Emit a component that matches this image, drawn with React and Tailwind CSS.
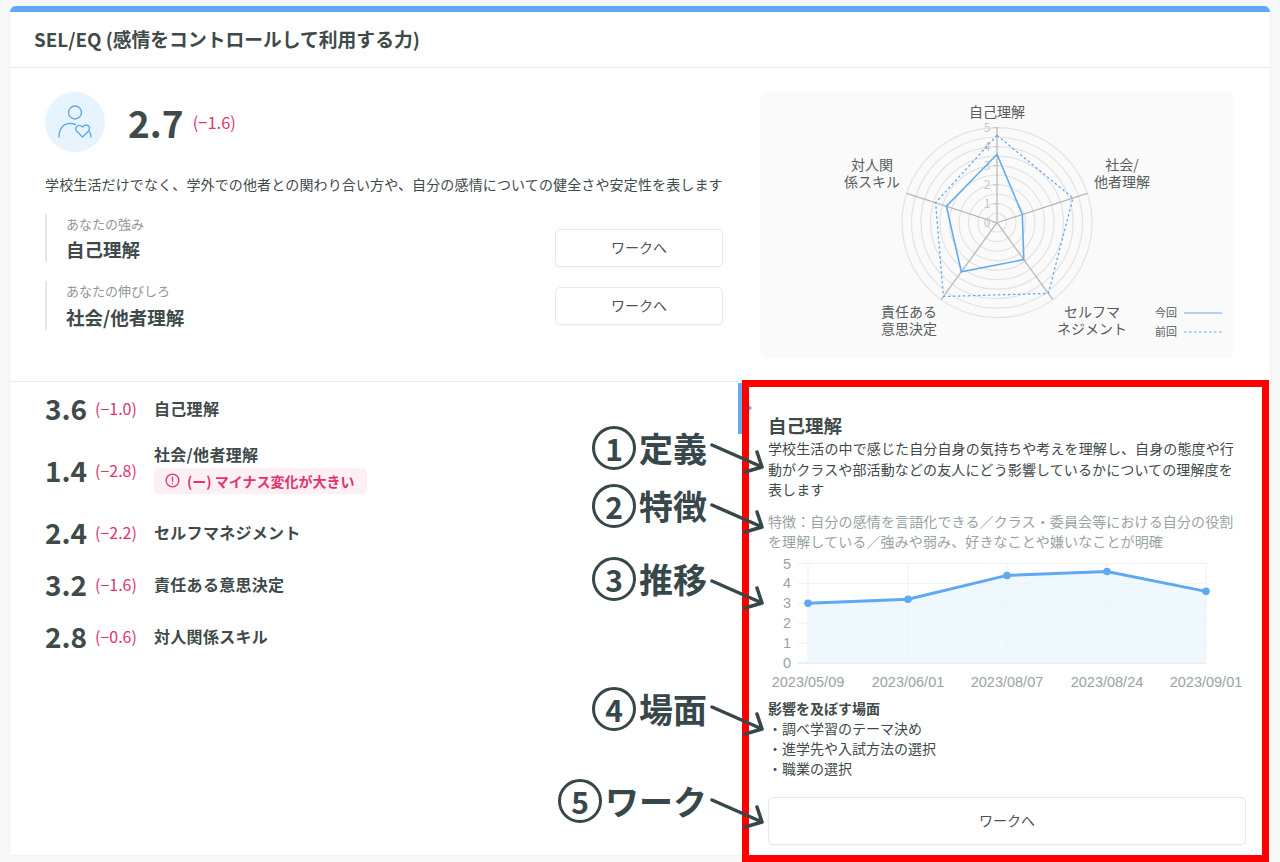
const scores = [
  { value: '3.6', diff: '(−1.0)', label: '自己理解', height: 'h-[52px]' },
  { value: '1.4', diff: '(−2.8)', label: '社会/他者理解', warn: true, height: 'h-[72px]' },
  { value: '2.4', diff: '(−2.2)', label: 'セルフマネジメント', height: 'h-[52px]' },
  { value: '3.2', diff: '(−1.6)', label: '責任ある意思決定', height: 'h-[52px]' },
  { value: '2.8', diff: '(−0.6)', label: '対人関係スキル', height: 'h-[52px]' },
];

const notes = [
  { mark: '①', text: '定義', pos: 'left-[592px] top-[425px]' },
  { mark: '②', text: '特徴', pos: 'left-[592px] top-[483px]' },
  { mark: '③', text: '推移', pos: 'left-[592px] top-[556px]' },
  { mark: '④', text: '場面', pos: 'left-[592px] top-[686px]' },
  { mark: '⑤', text: 'ワーク', pos: 'left-[558px] top-[778px]' },
];

// tip of each arrow, in page coordinates
const arrows = [
  [762, 467],
  [762, 527],
  [762, 603],
  [762, 729],
  [762, 822],
];

const CX = 997;
const CY = 222.7;
const UNIT = 19;
const current = [3.6, 1.4, 2.4, 3.2, 2.8];
const previous = [4.6, 4.2, 4.6, 4.8, 3.4];

const radarPoint = (i, v) => {
  const a = (Math.PI * 2 * i) / 5 - Math.PI / 2;
  return [CX + Math.cos(a) * v * UNIT, CY + Math.sin(a) * v * UNIT];
};
const radarPath = (vals) => vals.map((v, i) => radarPoint(i, v).map((n) => n.toFixed(1)).join(',')).join(' ');

function Radar() {
  const labels = [
    { x: 997, ys: [117], lines: ['自己理解'] },
    { x: 1122, ys: [170, 187], lines: ['社会/', '他者理解'] },
    { x: 1092, ys: [317, 334], lines: ['セルフマ', 'ネジメント'] },
    { x: 909, ys: [317, 334], lines: ['責任ある', '意思決定'] },
    { x: 872, ys: [170, 187], lines: ['対人関', '係スキル'] },
  ];
  return (
    <svg viewBox="760 92 473 266" className="block h-[266px] w-[473px]">
      {[0.5, 1, 1.5, 2, 2.5, 3, 3.5, 4, 4.5, 5].map((r) => (
        <circle key={r} cx={CX} cy={CY} r={r * UNIT} fill="none" stroke="#e3e3e3" strokeWidth="1.2" />
      ))}
      {[0, 1, 2, 3, 4].map((i) => {
        const [x, y] = radarPoint(i, 5);
        return <line key={i} x1={CX} y1={CY} x2={x} y2={y} stroke="#b5b5b5" strokeWidth="1.2" />;
      })}
      {[0, 1, 2, 3, 4, 5].map((n) => (
        <g key={n}>
          <line x1={CX - 4} x2={CX + 2} y1={CY - n * UNIT} y2={CY - n * UNIT} stroke="#c4c4c4" />
          <text x={987} y={CY - n * UNIT + 4.5} textAnchor="middle" fontSize="12" fill="#c6c9c9" fontFamily="Noto Sans CJK JP, sans-serif">
            {n}
          </text>
        </g>
      ))}
      <polygon points={radarPath(previous)} fill="none" stroke="#62aaf0" strokeWidth="1.3" strokeDasharray="2.500 2.500" />
      <polygon points={radarPath(current)} fill="none" stroke="#62aaf0" strokeWidth="1.6" />
      {labels.map((l) =>
        l.lines.map((t, j) => (
          <text key={t} x={l.x} y={l.ys[j]} textAnchor="middle" fontSize="14" fill="#555d5d" fontFamily="Noto Sans CJK JP, sans-serif">
            {t}
          </text>
        )),
      )}
      <text x={1155} y={317} fontSize="11" fill="#555d5d" fontFamily="Noto Sans CJK JP, sans-serif">今回</text>
      <text x={1155} y={336} fontSize="11" fill="#555d5d" fontFamily="Noto Sans CJK JP, sans-serif">前回</text>
      <line x1={1184} x2={1222} y1={313} y2={313} stroke="#62aaf0" strokeWidth="1.2" />
      <line x1={1184} x2={1222} y1={332} y2={332} stroke="#62aaf0" strokeWidth="1.2" strokeDasharray="2.500 2.500" />
    </svg>
  );
}

function TrendChart() {
  const xs = [808, 908, 1007, 1107, 1206];
  const vals = [3, 3.2, 4.4, 4.6, 3.6];
  const dates = ['2023/05/09', '2023/06/01', '2023/08/07', '2023/08/24', '2023/09/01'];
  const yOf = (v) => 663 - v * 19.9;
  const line = xs.map((x, i) => `${x},${yOf(vals[i]).toFixed(1)}`).join(' ');
  return (
    <svg viewBox="768 553 478 140" className="block h-[140px] w-[478px]">
      {[0, 1, 2, 3, 4, 5].map((n) => (
        <g key={n}>
          <line x1={798} x2={1206} y1={yOf(n)} y2={yOf(n)} stroke={n === 0 ? '#d8e0e4' : '#eff1f2'} />
          <text x={787} y={yOf(n) + 5} textAnchor="middle" fontSize="14.500" fill="#9aa3a3" fontFamily="Liberation Sans, sans-serif">
            {n}
          </text>
        </g>
      ))}
      {xs.map((x) => (
        <line key={x} x1={x} x2={x} y1={563} y2={663} stroke="#eff1f2" />
      ))}
      <polygon points={`808,663 ${line} 1206,663`} fill="#e9f5fc" fillOpacity="0.75" />
      <polyline points={line} fill="none" stroke="#5fa8f3" strokeWidth="3" />
      {xs.map((x, i) => (
        <circle key={x} cx={x} cy={yOf(vals[i])} r="3.8" fill="#5fa8f3" />
      ))}
      {xs.map((x, i) => (
        <text key={dates[i]} x={x} y={687} textAnchor="middle" fontSize="14.500" fill="#9aa3a3" fontFamily="Liberation Sans, sans-serif">
          {dates[i]}
        </text>
      ))}
    </svg>
  );
}

function WorkButton({ className }) {
  return (
    <button className={`rounded-[5px] border border-[#e7e9e9] bg-white text-[14px] text-[#4a5353] shadow-[0_1px_2px_rgba(0,0,0,0.04)] ${className}`}>
      ワークへ
    </button>
  );
}

function Arrow({ tip }) {
  const [x, y] = tip;
  return (
    <svg className="pointer-events-none absolute left-0 top-0 h-[862px] w-[1280px]" viewBox="0 0 1280 862">
      <path
        d={`M${x - 50} ${y - 22}L${x} ${y}M${x - 5} ${y - 15}L${x} ${y}L${x - 17} ${y + 5}`}
        fill="none"
        stroke="#37474a"
        strokeWidth="3.500"
        strokeLinecap="round"
        strokeLinejoin="round"
      />
    </svg>
  );
}

export default function App() {
  return (
    <div className="relative h-[862px] w-[1280px] overflow-hidden bg-[#f7f8f8] px-[10px] pt-[6px] font-['Noto_Sans_CJK_JP','Noto_Sans',sans-serif] text-[#3f4a4a]">
      <div className="flex h-[849px] flex-col rounded-t-[6px] border-t-[6px] border-[#5fa8f3] bg-white shadow-[0_0_2px_rgba(0,0,0,0.08)]">
        <div className="flex h-[56px] shrink-0 items-center border-b border-[#e9ecec] pl-[24px] text-[18.800px] font-bold leading-none">
          SEL/EQ (感情をコントロールして利用する力)
        </div>

        <div className="flex h-[314px] shrink-0 border-b border-[#e9ecec] pl-[35px] pr-[36px] pt-[24px]">
          <div className="w-[678px] shrink-0">
            <div className="flex items-center">
              <div className="flex h-[60px] w-[60px] items-center justify-center rounded-full bg-[#e8f4fd]">
                <svg viewBox="0 0 40 40" className="h-[40px] w-[40px]" fill="none" stroke="#5fa8f3" strokeWidth="1.4" strokeLinecap="round" strokeLinejoin="round">
                  <circle cx="20" cy="10.5" r="6.5" />
                  <path d="M4 35c0-8 4-13 10-13.5 3-.3 5 .3 6.500 1" />
                  <path d="M27.500 35l-5.500-5.500c-3.500-3.500 1.500-8.500 5.500-4.500 4-4 9-1 6 4l-6 6" />
                  <path d="M34 29c1.500 2 2 4 2 6" />
                </svg>
              </div>
              <span className="ml-[23px] text-[37px] font-bold leading-none">2.7</span>
              <span className="ml-[9px] text-[16.500px] leading-none text-[#e0356b]">(−1.6)</span>
            </div>
            <p className="mt-[21px] whitespace-nowrap text-[14px] leading-[22px] tracking-[0.14px]">
              学校生活だけでなく、学外での他者との関わり合い方や、自分の感情についての健全さや安定性を表します
            </p>
            <div className="mt-[19px] flex h-[48px] items-center justify-between">
              <div className="h-full border-l-2 border-[#e5e7e7] pl-[19px]">
                <div className="text-[13px] leading-[20px] text-[#8f9797]">あなたの強み</div>
                <div className="text-[18.500px] font-bold leading-[30px]">自己理解</div>
              </div>
              <WorkButton className="mt-[19px] h-[38px] w-[168px]" />
            </div>
            <div className="mt-[19px] flex h-[49px] items-center justify-between">
              <div className="h-full border-l-2 border-[#e5e7e7] pl-[19px]">
                <div className="text-[13px] leading-[20px] text-[#8f9797]">あなたの伸びしろ</div>
                <div className="text-[18.500px] font-bold leading-[32px]">社会/他者理解</div>
              </div>
              <WorkButton className="h-[38px] w-[168px]" />
            </div>
          </div>
          <div className="ml-[37px] h-[266px] w-[473px] shrink-0 rounded-[6px] bg-[#fafafa]">
            <Radar />
          </div>
        </div>

        <div className="flex min-h-0 flex-1">
          <div className="w-[732px] shrink-0 pl-[35px] pt-0">
            {scores.map((s) => (
              <div key={s.value} className={`flex items-center ${s.height}`}>
                <span className="w-[50px] shrink-0 text-[28px] font-bold leading-none">{s.value}</span>
                <span className="w-[60px] shrink-0 text-[16px] leading-none text-[#e0356b]">{s.diff}</span>
                <div className={s.warn ? '-ml-[1px] mb-[4px]' : '-ml-[1px]'}>
                  <div className="text-[16px] font-semibold leading-[22px] tracking-[0.3px]">{s.label}</div>
                  {s.warn && (
                    <div className="mt-[3px] flex h-[26px] w-[213px] items-center rounded-[5px] bg-[#fdf0f4] pl-[11px] text-[14px] font-bold leading-none text-[#e0356b]">
                      <svg viewBox="0 0 16 16" className="mr-[7px] h-[15px] w-[15px]" fill="none" stroke="#e0356b" strokeWidth="1.4" strokeLinecap="round">
                        <circle cx="8" cy="8" r="6.800" />
                        <path d="M8 4.500v4.200M8 11.300v.1" />
                      </svg>
                      (ー) マイナス変化が大きい
                    </div>
                  )}
                </div>
              </div>
            ))}
          </div>

          <div className="relative -mt-[2px] h-[482px] w-[527px] shrink-0 border-[7px] border-[#ff0000] bg-white pl-[19px] pr-[16px] pt-[26px]">
            <div className="absolute -left-[11px] -top-[4px] h-[51px] w-[4px] bg-[#6aaaf0]" />
            <div className="absolute left-0 top-[18px] h-0 w-0 border-y-[3px] border-l-[3px] border-y-transparent border-l-[#6aaaf0]" />
            <h2 className="text-[18.500px] font-bold leading-[25px]">自己理解</h2>
            <p className="text-[14px] leading-[20.500px] tracking-[0.12px]">
              学校生活の中で感じた自分自身の気持ちや考えを理解し、自身の態度や行動がクラスや部活動などの友人にどう影響しているかについての理解度を表します
            </p>
            <p className="mt-[11px] text-[14px] leading-[20.500px] tracking-[0.12px] text-[#9aa3a3]">
              特徴：自分の感情を言語化できる／クラス・委員会等における自分の役割を理解している／強みや弱み、好きなことや嫌いなことが明確
            </p>
            <div className="mt-[1px]">
              <TrendChart />
            </div>
            <div className="mt-[5px] text-[14px] font-bold leading-[20px]">影響を及ぼす場面</div>
            <ul className="text-[14px] leading-[20px]">
              <li>・調べ学習のテーマ決め</li>
              <li>・進学先や入試方法の選択</li>
              <li>・職業の選択</li>
            </ul>
            <WorkButton className="mt-[19px] h-[48px] w-[478px]" />
          </div>
        </div>
      </div>

      {notes.map((n) => (
        <div key={n.mark} className={`absolute flex h-[46px] items-center text-[34px] font-bold leading-none text-[#37474a] ${n.pos}`}>
          <span className="flex h-[44px] w-[44px] items-center justify-center rounded-full border-[3px] border-[#37474a] text-[30px]">
            {'①②③④⑤'.indexOf(n.mark) + 1}
          </span>
          <span className="ml-[3px]">{n.text}</span>
        </div>
      ))}
      {arrows.map((tip) => (
        <Arrow key={tip[1]} tip={tip} />
      ))}
    </div>
  );
}
